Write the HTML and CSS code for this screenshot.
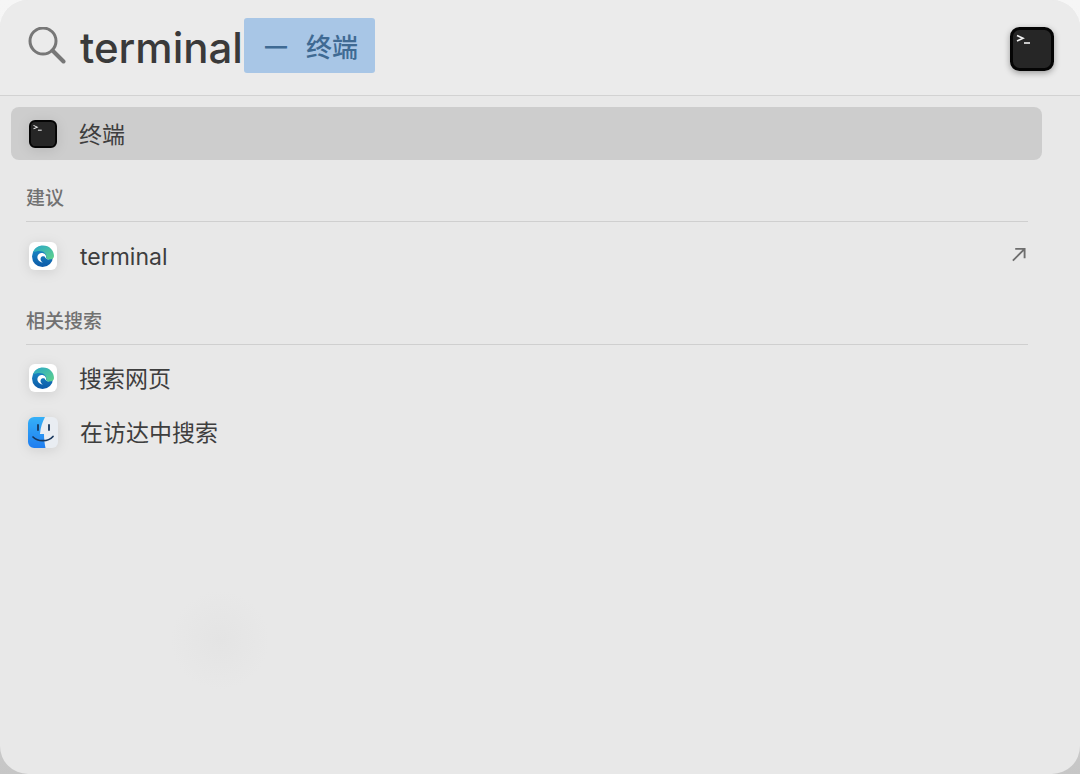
FILE: index.html
```html
<!DOCTYPE html>
<html lang="zh-CN">
<head>
<meta charset="utf-8">
<title>聚焦搜索</title>
<link rel="stylesheet" href="styles.css">
</head>
<body>

<svg class="defs" width="0" height="0">
	<defs>
		<linearGradient id="edgeBlue" x1="0" y1="0" x2="0" y2="1">
			<stop offset="0" stop-color="#1c8fc9"/>
			<stop offset="1" stop-color="#0c5aa8"/>
		</linearGradient>
		<linearGradient id="edgeGreen" x1="0" y1="0" x2="1" y2="1">
			<stop offset="0" stop-color="#2aa7c9"/>
			<stop offset="1" stop-color="#5fd28a"/>
		</linearGradient>
		<linearGradient id="finderBlue" x1="0" y1="0" x2="0" y2="1">
			<stop offset="0" stop-color="#35b0f7"/>
			<stop offset="1" stop-color="#1f7df0"/>
		</linearGradient>
		<symbol id="edge" viewBox="0 0 28 28">
			<rect width="28" height="28" rx="6" fill="#fff"/>
			<circle cx="13.500" cy="14.500" r="10.500" fill="url(#edgeBlue)"/>
			<path d="M4 10.500C5.500 6 9.500 3.500 14 3.500c6.500 0 11 5 11 10.500 0 2.500-2 3.500-4.500 3.500-1.500 0-3-.5-3.500-1 1.500-4-2-7.500-6.500-7.500-2.500 0-4.500.5-6.500 1.500z" fill="url(#edgeGreen)"/>
			<path d="M24 17.500c-3 .8-6-.2-7-1.500 .8-3-2-5.500-5.500-4.800-2.800.6-3.800 3.800-2.500 6.300 1 1.800 2.800 2.800 4.800 3-2-1.200-2.800-3.200-2-4.800 .8-1.400 2.800-1.700 4-1 .6 1.800 2.700 3.800 8.200 2.800z" fill="#fff"/>
		</symbol>
		<symbol id="term" viewBox="0 0 44 44">
			<rect x="1.500" y="1.500" width="41" height="41" rx="8" fill="#262626" stroke="#050505" stroke-width="3"/>
			<path d="M7 8.500l6 2.700-6 2.700" fill="none" stroke="#f2f2f2" stroke-width="1.600"/>
			<path d="M14 16h6" stroke="#f2f2f2" stroke-width="1.600"/>
		</symbol>
	</defs>
</svg>

<div class="panel">
	<div class="glow"></div>

	<header class="search">
		<svg class="lens" width="38" height="38" viewBox="0 0 38 38">
			<circle cx="15" cy="14" r="13" fill="none" stroke="#777" stroke-width="3"/>
			<path d="M24.500 23.500l11 11" stroke="#777" stroke-width="4" stroke-linecap="round"/>
		</svg>
		<span class="query">terminal</span>
		<span class="hint"><span class="hint-dash">—</span>终端</span>
		<svg class="icon-big" width="44" height="44"><use href="#term"/></svg>
	</header>

	<div class="results">
		<div class="row selected">
			<svg class="icon" width="28" height="28"><use href="#term"/></svg>
			<span>终端</span>
		</div>

		<div class="section">建议</div>
		<div class="row first">
			<svg class="icon" width="28" height="28"><use href="#edge"/></svg>
			<span class="latin">terminal</span>
			<svg class="arrow" width="15" height="15" viewBox="0 0 16 16">
				<path d="M2 14.500L14.500 2M4.500 2h10v10" fill="none" stroke="#6e6e6e" stroke-width="2"/>
			</svg>
		</div>

		<div class="section">相关搜索</div>
		<div class="row tight">
			<svg class="icon" width="28" height="28"><use href="#edge"/></svg>
			<span class="web">搜索网页</span>
		</div>
		<div class="row">
			<svg class="icon finder" width="30" height="31" viewBox="0 0 30 31">
				<rect width="30" height="31" rx="6" fill="#e9edf2"/>
				<path d="M6 0h11c-2.500 5-4.500 10-5 17h4c0 5 .5 9 1.500 14H6a6 6 0 0 1-6-6V6a6 6 0 0 1 6-6z" fill="url(#finderBlue)"/>
				<path d="M10 8v5M21 8v5" stroke="#17365c" stroke-width="1.800" stroke-linecap="round"/>
				<path d="M5 20c5 5 15 5 20-.5" fill="none" stroke="#17365c" stroke-width="1.700" stroke-linecap="round"/>
			</svg>
			<span class="cjk">在访达中搜索</span>
		</div>
	</div>
</div>

</body>
</html>
```

FILE: styles.css
```css
html, body {
	margin: 0;
	padding: 0;
}
body {
	width: 1080px;
	height: 774px;
	overflow: hidden;
	background: linear-gradient(#f6f6f6, #f0f0f0 40%, #c6c6c6);
	font-family: "Inter", "Noto Sans CJK SC", sans-serif;
	color: #3c3c3c;
}
.defs {
	display: block;
	height: 0;
}

.panel {
	position: relative;
	height: 774px;
	border-radius: 28px;
	background: #e8e8e8;
	overflow: hidden;
}
.glow {
	position: absolute;
	left: 170px;
	top: 590px;
	width: 100px;
	height: 100px;
	border-radius: 50%;
	background: radial-gradient(#e4e4e4, #e8e8e8 70%);
}

/* search bar */
.search {
	position: relative;
	display: flex;
	align-items: center;
	height: 96px;
	box-sizing: border-box;
	padding: 0 26px 4px 28px;
	background: #ebebeb;
	border-bottom: 1px solid #d2d2d2;
}
.lens {
	flex: none;
	margin: 0 14px 0 0;
}
.query {
	padding-top: 4px;
	font-size: 42px;
	font-weight: 500;
	line-height: 55px;
	color: #3a3a3a;
}
.hint {
	display: flex;
	align-items: center;
	width: 131px;
	height: 55px;
	box-sizing: border-box;
	margin-left: 1px;
	padding-left: 21px;
	border-radius: 3px;
	background: #a8c6e6;
	color: #3f6a93;
	font-size: 26px;
	font-weight: 500;
}
.hint-dash {
	width: 41px;
	font-size: 22px;
	font-weight: 700;
}
.icon-big {
	flex: none;
	margin-left: auto;
	margin-top: 6px;
	filter: drop-shadow(0 2px 3px rgba(0,0,0,.35));
}

/* result list */
.results {
	padding: 11px 52px 0 26px;
	position: relative;
}
.row {
	display: flex;
	align-items: center;
	height: 54px;
	font-size: 23px;
	color: #3e3e3e;
}
.row .icon {
	flex: none;
	margin: 0 23px 0 3px;
	filter: drop-shadow(0 2px 6px rgba(0,0,0,.1));
}
.row .finder {
	margin: 0 22px 0 2px;
}
.row.first {
	margin-top: 7px;
}
.row.tight {
	margin-top: 6px;
}
.latin {
	padding-top: 2px;
}
.cjk {
	margin-top: -2px;
}
.web {
	margin-top: -2px;
	margin-left: -1px;
}
.arrow {
	margin-left: auto;
	margin-right: 2px;
	margin-top: -3px;
}
.selected {
	height: 53px;
	margin: 0 -14px 0 -15px;
	padding-left: 15px;
	border-radius: 8px;
	background: #cdcdcd;
}
.selected span {
	margin-top: -2px;
	margin-left: -1px;
}
.section {
	height: 37px;
	margin-top: 25px;
	box-sizing: border-box;
	border-bottom: 1.5px solid #cfcfcf;
	font-size: 19px;
	line-height: 27px;
	font-weight: 500;
	color: #717171;
}
```
